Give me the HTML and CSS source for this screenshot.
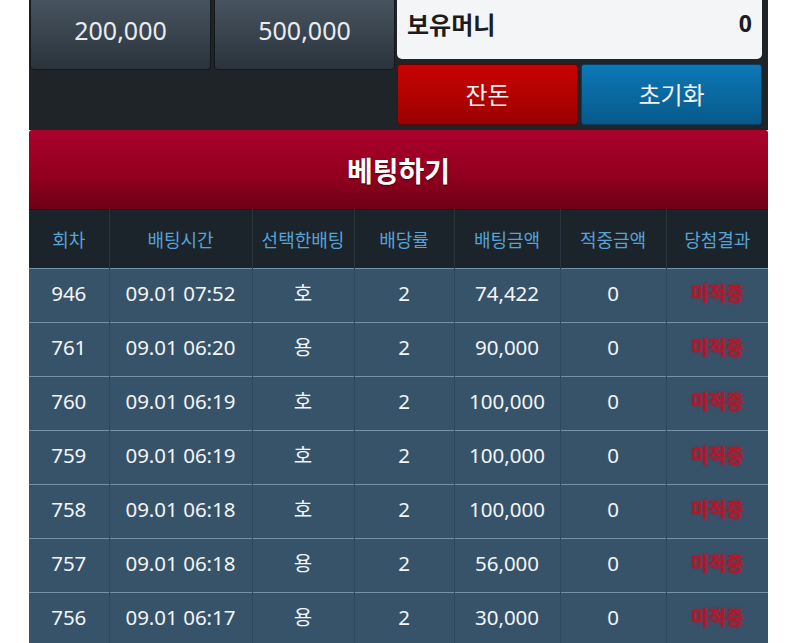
FILE: index.html
```html
<!DOCTYPE html>
<html lang="ko">
<head>
<meta charset="utf-8">
<title>베팅</title>
<link rel="stylesheet" href="styles.css">
</head>
<body>
<div class="wrap">
  <div class="top">
    <div class="left">
      <div class="amt">200,000</div>
      <div class="amt">500,000</div>
    </div>
    <div class="right">
      <div class="money"><span class="label">보유머니</span><span class="val">0</span></div>
      <div class="actions">
        <div class="btn red">잔돈</div>
        <div class="btn blue">초기화</div>
      </div>
    </div>
  </div>
  <div class="bet">베팅하기</div>
  <table class="hist">
    <colgroup>
      <col class="c1"><col class="c2"><col class="c3"><col class="c4"><col class="c5"><col class="c6"><col class="c7">
    </colgroup>
    <thead>
      <tr><th>회차</th><th>배팅시간</th><th>선택한배팅</th><th>배당률</th><th>배팅금액</th><th>적중금액</th><th class="nb">당첨결과</th></tr>
    </thead>
    <tbody>
      <tr><td>946</td><td>09.01 07:52</td><td>호</td><td>2</td><td>74,422</td><td>0</td><td class="nb lose">미적중</td></tr>
      <tr><td>761</td><td>09.01 06:20</td><td>용</td><td>2</td><td>90,000</td><td>0</td><td class="nb lose">미적중</td></tr>
      <tr><td>760</td><td>09.01 06:19</td><td>호</td><td>2</td><td>100,000</td><td>0</td><td class="nb lose">미적중</td></tr>
      <tr><td>759</td><td>09.01 06:19</td><td>호</td><td>2</td><td>100,000</td><td>0</td><td class="nb lose">미적중</td></tr>
      <tr><td>758</td><td>09.01 06:18</td><td>호</td><td>2</td><td>100,000</td><td>0</td><td class="nb lose">미적중</td></tr>
      <tr><td>757</td><td>09.01 06:18</td><td>용</td><td>2</td><td>56,000</td><td>0</td><td class="nb lose">미적중</td></tr>
      <tr><td>756</td><td>09.01 06:17</td><td>용</td><td>2</td><td>30,000</td><td>0</td><td class="nb lose">미적중</td></tr>
    </tbody>
  </table>
</div>
</body>
</html>
```

FILE: styles.css
```css
html, body {
  margin: 0;
  padding: 0;
  background: #ffffff;
}
body {
  font-family: "Noto Sans", "Noto Sans CJK KR", sans-serif;
  overflow: hidden;
}
.wrap {
  width: 739px;
  margin: -8px 0 0 29px;
}
.top {
  display: flex;
  gap: 2px;
  background: #1e2428;
  padding: 0 6px 5px 1px;
}
.left {
  display: flex;
  gap: 3px;
  align-items: flex-start;
}
.amt {
  width: 181px;
  height: 78px;
  box-sizing: border-box;
  border: 1px solid #14181b;
  border-radius: 4px;
  background: linear-gradient(#4a5763, #2a333b);
  color: #e8ecef;
  font-size: 25px;
  display: flex;
  align-items: center;
  justify-content: center;
  padding-bottom: 2px;
}
.right {
  width: 365px;
  display: flex;
  flex-direction: column;
  gap: 5px;
}
.money {
  height: 67px;
  background: #f4f5f6;
  border-radius: 5px;
  display: flex;
  align-items: center;
  justify-content: space-between;
  padding: 0 10px 5px 10px;
  box-sizing: border-box;
  color: #1c1c1c;
  font-weight: bold;
  font-size: 24px;
}
.money .val {
  font-size: 23px;
}
.actions {
  display: flex;
  gap: 3px;
}
.btn {
  flex: 1;
  height: 61px;
  box-sizing: border-box;
  border-radius: 3px;
  display: flex;
  align-items: center;
  justify-content: center;
  color: #f2f2f2;
  font-size: 24px;
  padding-bottom: 2px;
}
.btn.red {
  background: linear-gradient(#c80303, #9c0000);
  border: 1px solid #5e0505;
}
.btn.blue {
  background: linear-gradient(#0c78b6, #08598a);
  border: 1px solid #0a3f5f;
}
.bet {
  height: 79px;
  background: linear-gradient(#a9022c, #94001f 55%, #6e0016);
  border-radius: 3px 3px 0 0;
  color: #ffffff;
  font-size: 28px;
  font-weight: bold;
  display: flex;
  align-items: center;
  justify-content: center;
  text-shadow: 0 1px 2px rgba(0, 0, 0, 0.45);
}
.hist {
  width: 739px;
  border-collapse: collapse;
  table-layout: fixed;
}
.c1 { width: 80px; }
.c2 { width: 143px; }
.c3 { width: 102px; }
.c4 { width: 100px; }
.c5 { width: 106px; }
.c6 { width: 106px; }
.c7 { width: 102px; }
.hist th {
  height: 58px;
  background: #1b242b;
  color: #57a2d6;
  font-weight: normal;
  font-size: 18px;
  text-align: center;
  padding: 0;
  border-top: 1px solid #11171b;
  border-right: 1px solid #283440;
}
.hist td {
  height: 47px;
  background: #37536a;
  color: #f3f6f8;
  font-size: 20.5px;
  text-align: center;
  padding: 0 0 6px 0;
  border-top: 1px solid #7391a7;
  border-right: 1px solid #2f485c;
}
.hist td:nth-child(3) {
  font-size: 20px;
}
.hist th.nb, .hist td.nb {
  border-right: none;
}
.hist td.lose {
  color: #b3172a;
  font-weight: bold;
  font-size: 19px;
  text-shadow: 0 0 3px rgba(180, 20, 40, 0.9);
}
```
